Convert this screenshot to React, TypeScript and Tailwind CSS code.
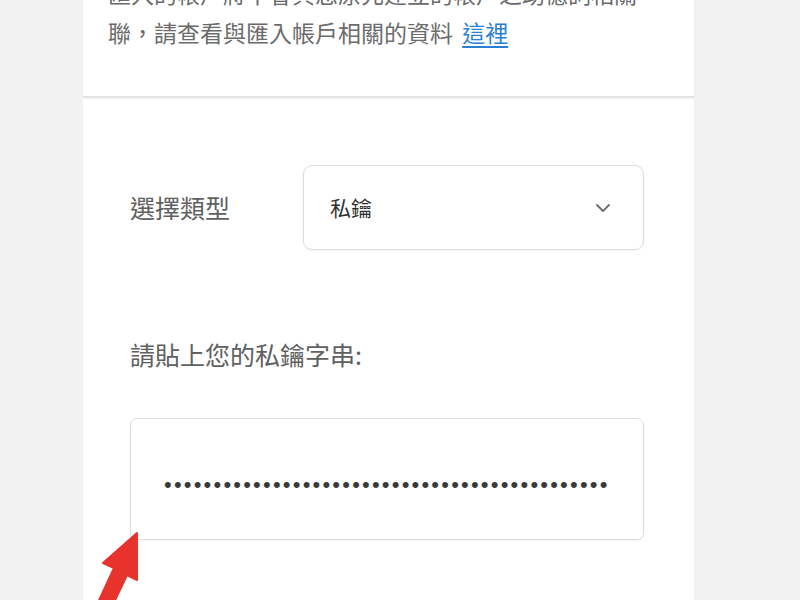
import { ChevronDown } from "lucide-react";

const FONT = "font-['Noto_Sans_CJK_TC','Noto_Sans',sans-serif]";

function ImportNote() {
    return (
        <div className="pl-[25px] pr-[20px] pb-[44px] border-b-2 border-[#e3e3e3] shadow-[0_1px_2px_rgba(0,0,0,0.06)]">
            <p className="-mt-[26px] text-[23px] leading-[39px] text-[#6b6b6b] whitespace-nowrap">
                <span className="block">匯入的帳戶將不會與您原先建立的帳戶之助憶詞相關</span>
                <span className="block">
                    聯，請查看與匯入帳戶相關的資料{" "}
                    <a href="#" className="ml-1 text-[#2a7fd4] underline underline-offset-4">這裡</a>
                </span>
            </p>
        </div>
    );
}

export default function App() {
    const dots = "•".repeat(45);

    return (
        <div className={`relative h-screen w-full overflow-hidden bg-[#f2f2f2] ${FONT}`}>
            <div className="ml-[83px] w-[611px] h-full flex flex-col bg-white">
                <ImportNote />

                <div className="pl-[47px] pr-[50px] pt-[67px]">
                    {/* type select */}
                    <div className="flex items-center">
                        <span className="w-[173px] text-[25px] text-[#606060]">選擇類型</span>
                        <div className="flex-1 h-[85px] flex items-center justify-between pl-[26px] pr-[28px] rounded-[9px] border border-[#dcdcdc] shadow-[0_1px_2px_rgba(0,0,0,0.05)]">
                            <span className="text-[21px] text-[#2f2f2f]">私鑰</span>
                            <ChevronDown className="w-6 h-6 text-[#6e6e6e]" strokeWidth={1.8} />
                        </div>
                    </div>

                    {/* private key input */}
                    <p className="mt-[86px] text-[25px] text-[#606060]">請貼上您的私鑰字串:</p>
                    <div className="mt-[44px] h-[122px] flex items-center pl-[33px] pt-[12px] rounded-[7px] border border-[#dcdcdc] shadow-[0_1px_2px_rgba(0,0,0,0.05)]">
                        <span className="font-['Liberation_Sans',sans-serif] text-[22px] tracking-[2.2px] text-[#3a3a3a]">{dots}</span>
                    </div>
                </div>
            </div>

            {/* annotation arrow */}
            <svg className="absolute left-0 top-0 pointer-events-none" width="800" height="600" viewBox="0 0 800 600">
                <polygon
                    points="137,533 137,580 127,575 108,615 95,609 114,568 103,563"
                    fill="#e8322c"
                    stroke="#e8322c"
                    strokeWidth="2"
                    strokeLinejoin="round"
                />
            </svg>
        </div>
    );
}
